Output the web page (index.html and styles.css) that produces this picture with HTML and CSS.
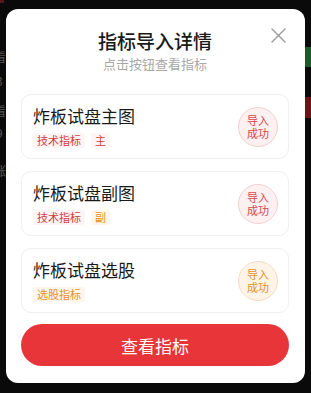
FILE: index.html
```html
<!DOCTYPE html>
<html lang="zh">
<head>
<meta charset="utf-8">
<link rel="stylesheet" href="styles.css">
</head>
<body>
<div class="backdrop">
  <span class="bg-dot"></span>
  <span class="bg-green"></span>
  <span class="bg-red"></span>
  <span class="bg-txt t1">看</span>
  <span class="bg-txt t2">3</span>
  <span class="bg-txt t3">看</span>
  <span class="bg-txt t4">9</span>
  <span class="bg-txt t5">涨</span>
</div>
<div class="modal">
  <div class="close">
    <svg width="15" height="15" viewBox="0 0 15 15"><path d="M1 1 L14 14 M14 1 L1 14" stroke="#9a9a9a" stroke-width="1.4" fill="none" stroke-linecap="round"/></svg>
  </div>
  <div class="title">指标导入详情</div>
  <div class="subtitle">点击按钮查看指标</div>
  <div class="list">
    <div class="card">
      <div class="info">
        <div class="name">炸板试盘主图</div>
        <div class="tags">
          <span class="tag red">技术指标</span>
          <span class="tag red">主</span>
        </div>
      </div>
      <div class="badge red"><span>导入</span><span>成功</span></div>
    </div>
    <div class="card">
      <div class="info">
        <div class="name">炸板试盘副图</div>
        <div class="tags">
          <span class="tag red">技术指标</span>
          <span class="tag orange">副</span>
        </div>
      </div>
      <div class="badge red"><span>导入</span><span>成功</span></div>
    </div>
    <div class="card">
      <div class="info">
        <div class="name">炸板试盘选股</div>
        <div class="tags">
          <span class="tag orange">选股指标</span>
        </div>
      </div>
      <div class="badge orange"><span>导入</span><span>成功</span></div>
    </div>
  </div>
  <div class="btn">查看指标</div>
</div>
</body>
</html>
```
FILE: styles.css
```css
* { box-sizing: border-box; }
html, body {
  margin: 0;
  padding: 0;
  width: 311px;
  height: 393px;
  overflow: hidden;
  background: #0a0a0a;
  font-family: "Noto Sans CJK SC", "Noto Sans", sans-serif;
}
body { position: relative; padding-top: 9px; }
.backdrop { position: absolute; inset: 0; }
.bg-dot { position: absolute; left: 0; top: 0; width: 4px; height: 3px; background: #5a1616; }
.bg-green { position: absolute; right: 0; top: 47px; width: 6px; height: 20px; background: #1d5a27; }
.bg-red { position: absolute; right: 0; top: 97px; width: 6px; height: 21px; background: #6a1515; }
.bg-txt { position: absolute; color: #555; font-size: 12px; line-height: 14px; }
.t1 { left: -6px; top: 50px; }
.t2 { left: -4px; top: 74px; }
.t3 { left: -6px; top: 104px; }
.t4 { left: -4px; top: 126px; }
.t5 { left: -6px; top: 164px; }

.modal {
  position: relative;
  margin: 0 6px;
  width: 299px;
  height: 374px;
  background: #fff;
  border-radius: 12px;
  padding: 19px 16px 17px 15px;
  display: flex;
  flex-direction: column;
}
.close {
  position: absolute;
  top: 19px;
  right: 19px;
  width: 15px;
  height: 15px;
  display: flex;
}
.title {
  text-align: center;
  font-size: 19px;
  line-height: 26px;
  font-weight: 500;
  color: #1a1a1a;
}
.subtitle {
  margin-top: 1px;
  text-align: center;
  font-size: 13px;
  line-height: 18px;
  color: #a8a8a8;
}
.list {
  margin-top: 21px;
  display: flex;
  flex-direction: column;
  gap: 12px;
}
.card {
  height: 65px;
  border: 1px solid #efefef;
  border-radius: 10px;
  padding: 0 10px 0 11px;
  display: flex;
  align-items: center;
  justify-content: space-between;
}
.info { display: flex; flex-direction: column; }
.name {
  font-size: 17px;
  line-height: 22px;
  color: #1a1a1a;
  font-weight: 400;
}
.tags { display: flex; gap: 6px; margin-top: 6px; }
.tag {
  font-size: 11px;
  line-height: 15px;
  padding: 0 4px;
  border-radius: 2px;
}
.tag.red { color: #d43c3c; background: #fdf4f4; }
.tag.orange { color: #e8912d; background: #fdf6ec; }
.badge {
  width: 40px;
  height: 40px;
  border-radius: 50%;
  font-size: 11px;
  display: flex;
  flex-direction: column;
  align-items: center;
  justify-content: center;
}
.badge span { display: block; line-height: 13px; height: 13px; }
.badge.red { color: #d6474b; background: #fdf0f0; border: 1px solid #f3cfcf; }
.badge.orange { color: #e4902f; background: #fdf3e6; border: 1px solid #f3ddc3; }
.btn {
  margin-top: 11px;
  height: 42px;
  border-radius: 21px;
  background: #e8353a;
  color: #fff;
  font-size: 17px;
  font-weight: 400;
  display: flex;
  align-items: center;
  justify-content: center;
}
```
